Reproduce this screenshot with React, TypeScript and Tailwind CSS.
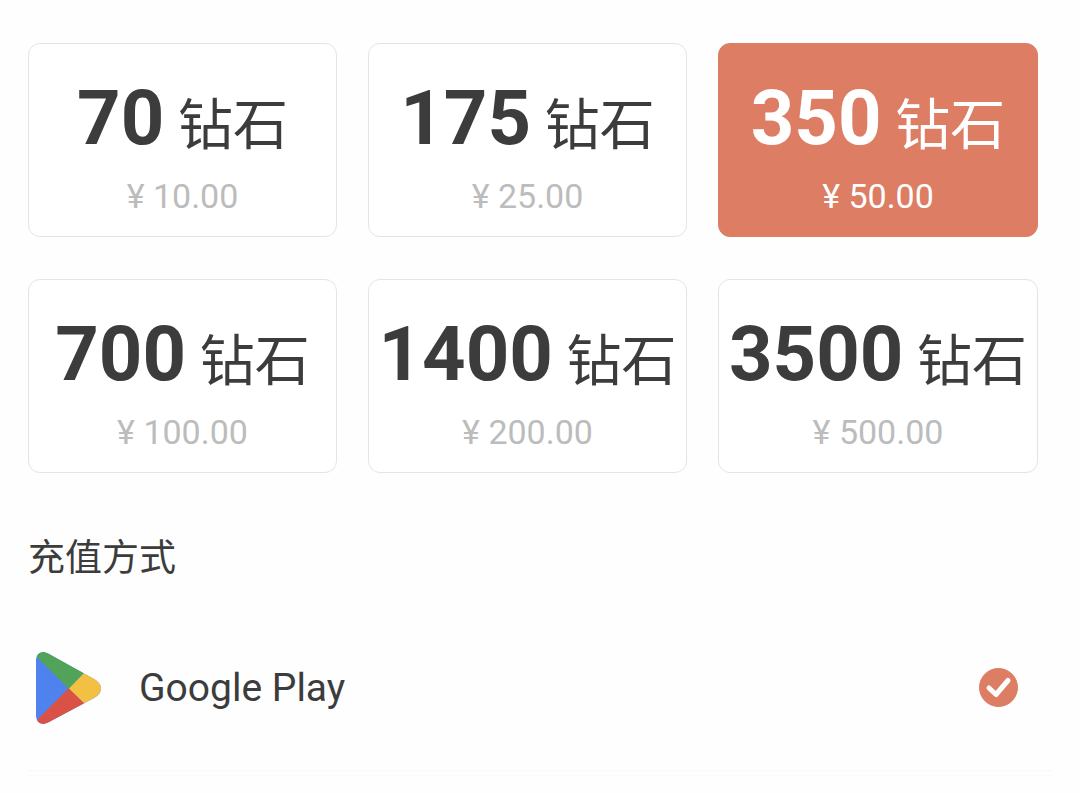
import React, { useState } from 'react';

interface DiamondPack {
  amount: number;
  price: string;
}

const packs: DiamondPack[] = [
  { amount: 70, price: '10.00' },
  { amount: 175, price: '25.00' },
  { amount: 350, price: '50.00' },
  { amount: 700, price: '100.00' },
  { amount: 1400, price: '200.00' },
  { amount: 3500, price: '500.00' },
];

interface PackCardProps {
  pack: DiamondPack;
  selected: boolean;
  onSelect: () => void;
}

const PackCard: React.FC<PackCardProps> = ({ pack, selected, onSelect }) => (
  <button
    type="button"
    aria-pressed={selected}
    onClick={onSelect}
    className={`flex flex-col items-center gap-3 rounded-xl border pt-7 pb-5 cursor-pointer ${
      selected
        ? 'bg-[#dc7d64] border-[#dc7d64] text-white'
        : 'bg-white border-[#e4e4e4] text-[#3c3c3c]'
    }`}
  >
    <span className="whitespace-nowrap text-[76px] leading-[92px]">
      <span className="font-bold">{pack.amount}</span>
      <span className="text-[55px] leading-none"> 钻石</span>
    </span>
    <span className={`text-[34px] leading-[40px] ${selected ? 'text-white' : 'text-[#bcbcbc]'}`}>
      ¥ {pack.price}
    </span>
  </button>
);

const GooglePlayLogo = () => (
  <svg viewBox="0 0 65 72" className="w-[65px] h-[72px]" aria-hidden="true">
    <defs>
      <clipPath id="play-shape">
        <path d="M0 9C0 1 6 -2 13 2L58 27Q65 31 65 36.500T58 46L13 70C6 74 0 71 0 63Z" />
      </clipPath>
    </defs>
    <g clipPath="url(#play-shape)">
      <path d="M0 0H65V72H0Z" fill="#4f82ed" />
      <path d="M0 4L33 37L48 21V0H0Z" fill="#51a457" />
      <path d="M0 69L33 36L48 51V72H0Z" fill="#da5245" />
      <path d="M33 36.500L48 21L65 20V52L48 51Z" fill="#f2c143" />
    </g>
  </svg>
);

const App: React.FC = () => {
  const [selectedAmount, setSelectedAmount] = useState(350);
  const [method, setMethod] = useState('google-play');

  return (
    <main className="min-h-screen bg-[#fefefe] pt-[43px] pb-4 pl-7 text-[#3c3c3c] font-['Roboto','Noto_Sans_CJK_SC',sans-serif]">
      <div className="grid grid-cols-[309fr_319fr_320fr] gap-x-[31px] gap-y-[42px] pr-[42px]">
        {packs.map((pack) => (
          <PackCard
            key={pack.amount}
            pack={pack}
            selected={pack.amount === selectedAmount}
            onSelect={() => setSelectedAmount(pack.amount)}
          />
        ))}
      </div>

      <h2 className="mt-15 text-[37px] leading-[52px]">充值方式</h2>

      <div className="mr-7 mt-5 border-b border-[#f8f8f8]">
        <label className="flex items-center h-[165px] pl-2 pr-[34px] cursor-pointer">
          <GooglePlayLogo />
          <span className="ml-[38px] flex-1 text-[39px] leading-[48px]">Google Play</span>
          <span className="grid place-items-center">
            <input
              type="radio"
              name="method"
              value="google-play"
              checked={method === 'google-play'}
              onChange={(e) => setMethod(e.target.value)}
              className="appearance-none col-start-1 row-start-1 size-[39px] rounded-full border border-gray-300 checked:border-[#dc7d64] checked:bg-[#dc7d64]"
            />
            <svg
              viewBox="0 0 39 39"
              className="col-start-1 row-start-1 size-[39px] pointer-events-none"
              fill="none"
              stroke="white"
              strokeWidth="5"
              strokeLinecap="round"
              strokeLinejoin="round"
              aria-hidden="true"
            >
              <path d="M10 20L17 26.500L29 12.500" />
            </svg>
          </span>
        </label>
      </div>
      <div className="mr-7 mt-1 border-b border-[#fafafa]" />
    </main>
  );
};

export default App;
